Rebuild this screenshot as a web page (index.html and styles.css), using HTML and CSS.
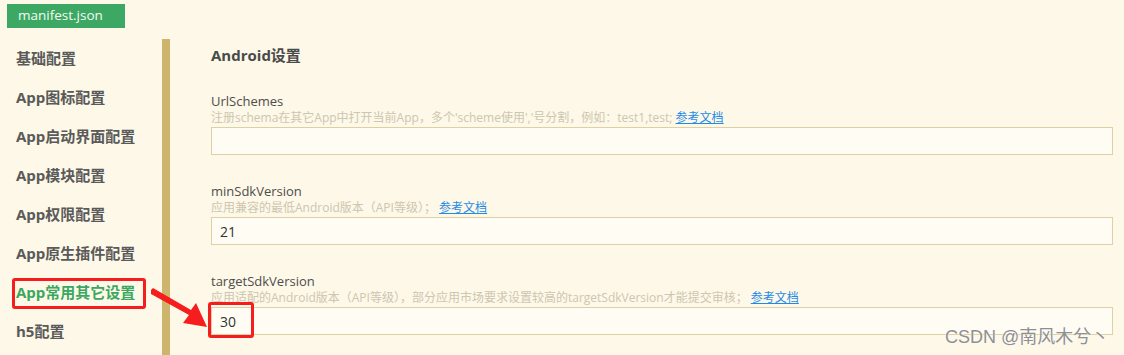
FILE: index.html
```html
<!DOCTYPE html>
<html lang="zh-CN">
<head>
    <meta charset="UTF-8">
    <title>manifest.json</title>
    <link rel="stylesheet" href="styles.css">
</head>
<body>

    <div class="tab-bar">
        <div class="tab">manifest.json</div>
    </div>

    <div class="main">
        <ul class="side-menu">
            <li>基础配置</li>
            <li>App图标配置</li>
            <li>App启动界面配置</li>
            <li>App模块配置</li>
            <li>App权限配置</li>
            <li>App原生插件配置</li>
            <li class="active">App常用其它设置</li>
            <li>h5配置</li>
        </ul>

        <div class="content">
            <h3>Android设置</h3>

            <div class="field">
                <div class="field-label">UrlSchemes</div>
                <div class="field-hint">注册schema在其它App中打开当前App，多个'scheme使用','号分割，例如：test1,test; <a href="#">参考文档</a></div>
                <input type="text" class="field-input" value="">
            </div>

            <div class="field">
                <div class="field-label">minSdkVersion</div>
                <div class="field-hint">应用兼容的最低Android版本（API等级）； <a href="#">参考文档</a></div>
                <input type="text" class="field-input" value="21">
            </div>

            <div class="field">
                <div class="field-label">targetSdkVersion</div>
                <div class="field-hint">应用适配的Android版本（API等级），部分应用市场要求设置较高的targetSdkVersion才能提交审核； <a href="#">参考文档</a></div>
                <input type="text" class="field-input" value="30">
            </div>
        </div>
    </div>

    <!-- 标注 -->
    <div class="mark mark-menu"></div>
    <div class="mark mark-input"></div>
    <svg class="mark-arrow" width="1124" height="355" viewBox="0 0 1124 355">
        <polygon points="151,290 153,288 191,310 196,303 207,327 183,323 189,315 151,294" fill="#f51d1d"/>
    </svg>

    <div class="watermark">CSDN @南风木兮丶</div>

</body>
</html>
```

FILE: styles.css
```css
body {
    margin: 0;
    padding: 0;
    background-color: #fdf8e7;
    font-family: "Open Sans", "Noto Sans CJK SC", sans-serif;
    height: 355px;
    overflow: hidden;
    position: relative;
}

.tab-bar {
    padding: 4px 7px 0;
    height: 39px;
    box-sizing: border-box;
}

.tab {
    width: 118px;
    height: 24px;
    line-height: 23px;
    background-color: #3ca863;
    color: #f4fbf2;
    font-size: 13.5px;
    padding-left: 11px;
    box-sizing: border-box;
}

.main {
    display: flex;
    height: 316px;
}

.side-menu {
    list-style: none;
    margin: 0;
    padding: 0;
    width: 162px;
    flex-shrink: 0;
}

.side-menu li {
    height: 39px;
    line-height: 39px;
    padding-left: 16px;
    font-size: 15px;
    font-weight: bold;
    color: #5a5a5a;
}

.side-menu li.active {
    color: #3aa861;
}

.content {
    flex: 1;
    border-left: 8px solid #cdb56c;
    padding: 6px 11px 0 41px;
}

h3 {
    margin: 0 0 27px;
    font-size: 15px;
    line-height: 20px;
    color: #4a4a4a;
}

.field {
    margin-bottom: 27px;
}

.field-label {
    font-size: 13px;
    line-height: 18px;
    color: #4d4d4d;
}

.field-hint {
    font-size: 12px;
    line-height: 16px;
    color: #cdc6b1;
    margin-bottom: 1px;
    white-space: nowrap;
}

.field-hint a {
    color: #1f8be8;
    text-decoration: underline;
}

.field-input {
    display: block;
    width: 100%;
    height: 28px;
    box-sizing: border-box;
    border: 1px solid #ddd0a4;
    background-color: #fffcf4;
    padding: 0 8px;
    font-family: inherit;
    font-size: 14px;
    color: #333;
    outline: none;
}

.mark {
    position: absolute;
    border: 3px solid #f51d1d;
    border-radius: 3px;
    box-sizing: border-box;
}

.mark-menu {
    left: 12px;
    top: 278px;
    width: 134px;
    height: 31px;
}

.mark-input {
    left: 208px;
    top: 302px;
    width: 46px;
    height: 36px;
}

.mark-arrow {
    position: absolute;
    left: 0;
    top: 0;
}

.watermark {
    position: absolute;
    left: 945px;
    top: 325px;
    font-family: "Liberation Sans", "Noto Sans CJK SC", sans-serif;
    font-size: 18px;
    line-height: 24px;
    color: #8f8f8f;
    text-shadow: 0 0 2px #fff, 0 0 1px #fff;
}
```
